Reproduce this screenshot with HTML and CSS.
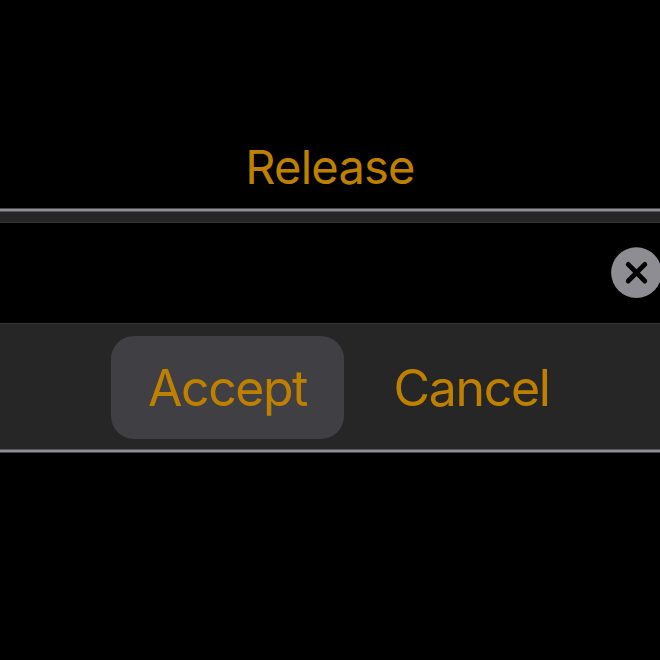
FILE: index.html
```
<!DOCTYPE html>
<html lang="en">
<head>
<meta charset="utf-8">
<title>Release</title>
<link rel="stylesheet" href="styles.css">
</head>
<body>
<main class="screen">
  <header class="heading"><span class="release">Release</span></header>
  <section class="panel">
    <div class="field">
      <svg class="clear" viewBox="0 0 52 52" role="img" aria-label="Clear"><circle cx="26.4" cy="25.6" r="25.3"/><path d="M18.2 17.4 34.8 34M34.8 17.4 18.2 34"/></svg>
    </div>
    <div class="actions">
      <button class="action selected"><span class="accept">Accept</span></button>
      <button class="action"><span class="cancel">Cancel</span></button>
    </div>
  </section>
</main>
</body>
</html>
```
FILE: styles.css
```
* { box-sizing: border-box; }
body { margin: 0; background: #000; font-family: Inter, sans-serif; color: #bf8000; }
.screen { width: 660px; height: 660px; overflow: hidden; background: #000; }
.heading { height: 208px; padding-top: 137px; text-align: center; font-size: 47px; line-height: 60px; }
.release, .accept, .cancel { display: inline-block; white-space: nowrap; }
.release { letter-spacing: -0.75px; }
.panel { height: 245px; padding: 14px 0 4px; background: linear-gradient(#48484b 0 1px, #8e8e93 1px 3px, #565659 3px 4px, #262626 4px 241px, #565659 241px 242px, #8e8e93 242px 244px, #48484b 244px); }
.field { height: 102px; background: #000; border-top: 1px solid #343434; border-bottom: 1px solid #343434; display: flex; justify-content: flex-end; align-items: center; }
.clear { width: 52px; height: 52px; margin: 0 -2px 0 0; flex: none; }
.clear circle { fill: #8e8d94; }
.clear path { fill: none; stroke: #000; stroke-width: 4.8; stroke-linecap: round; }
.actions { height: 126px; padding: 12px 0 0 111px; display: flex; gap: 11px; }
.action { width: 233px; height: 103px; padding: 2px 0 0; border: 0; border-radius: 23px; background: transparent; color: inherit; font: 50px/101px Inter, sans-serif; }
.selected { background: #403f43; }
.accept { letter-spacing: -1.45px; }
.cancel { letter-spacing: -1.3px; }
```
